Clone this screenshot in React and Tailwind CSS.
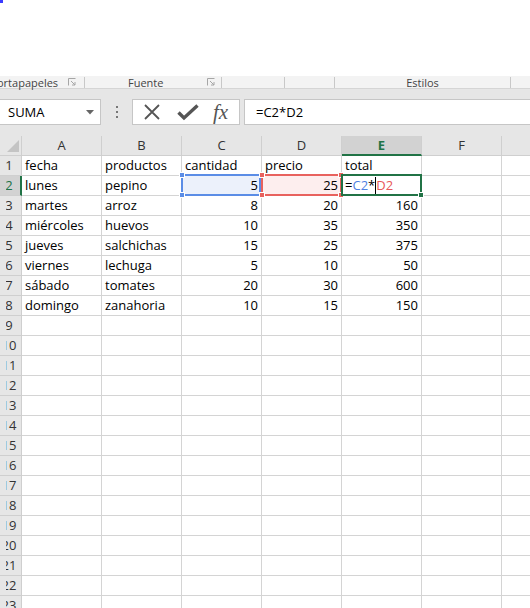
import React from "react";

const COLS = ["A", "B", "C", "D", "E", "F", ""];

const rows = [
  ["fecha", "productos", "cantidad", "precio", "total"],
  ["lunes", "pepino", "5", "25", ""],
  ["martes", "arroz", "8", "20", "160"],
  ["miércoles", "huevos", "10", "35", "350"],
  ["jueves", "salchichas", "15", "25", "375"],
  ["viernes", "lechuga", "5", "10", "50"],
  ["sábado", "tomates", "20", "30", "600"],
  ["domingo", "zanahoria", "10", "15", "150"],
];

const UI = { fontFamily: '"Open Sans", "Noto Sans", sans-serif' };

function Launcher() {
  return (
    <svg width="8" height="8" viewBox="0 0 8 8">
      <path d="M0.5 7.5V0.5H7.5" fill="none" stroke="#a6a6a6" />
      <path d="M3 3L7 7M7 4V7H4" fill="none" stroke="#a6a6a6" />
    </svg>
  );
}

function Handle({ pos, color }) {
  const p = {
    tl: "-left-[4px] -top-[4px]",
    tr: "-right-[4px] -top-[4px]",
    bl: "-left-[4px] -bottom-[4px]",
    br: "-right-[4px] -bottom-[4px]",
  }[pos];
  return <div className={`absolute w-[6px] h-[6px] border border-white ${p}`} style={{ background: color }} />;
}

function Cell({ col, row, value }) {
  const numeric = col >= 2 && row > 0;
  const isC2 = row === 1 && col === 2;
  const isD2 = row === 1 && col === 3;
  const isE2 = row === 1 && col === 4;
  let bg = "";
  if (isC2) bg = "bg-[#ecf1fb]";
  if (isD2) bg = "bg-[#fdeeee]";
  const right = numeric && !isE2;
  return (
    <div
      className={`relative h-[20px] border-r border-b border-[#d4d4d4] flex items-center text-[13px] leading-none text-black ${bg} ${
        right ? "justify-end pr-[3px]" : "pl-[3px]"
      }`}
    >
      {isE2 ? (
        <span className="flex items-center">
          <span>=</span>
          <span className="text-[#4f81e3]">C2</span>
          <span>*</span>
          <span className="w-px h-[17px] bg-black" />
          <span className="text-[#e8585a]">D2</span>
        </span>
      ) : (
        <span>{value}</span>
      )}
      {isC2 && (
        <div className="absolute -left-[1px] -top-[2px] right-0 -bottom-[1px] border-2 border-[#5b8de6] z-10">
          <Handle pos="tl" color="#5b8de6" />
          <Handle pos="bl" color="#5b8de6" />
        </div>
      )}
      {isD2 && (
        <div className="absolute -left-[1px] -top-[2px] -right-[1px] -bottom-[1px] border-2 border-[#e8625e] z-10">
          <Handle pos="tl" color="#e8625e" />
          <Handle pos="tr" color="#e8625e" />
          <Handle pos="bl" color="#e8625e" />
          <Handle pos="br" color="#e8625e" />
        </div>
      )}
      {isE2 && (
        <div className="absolute -left-[1px] -top-[2px] -right-[1px] -bottom-[1px] border-2 border-[#217346] z-10">
          <div className="absolute -right-[4px] -bottom-[4px] w-[6px] h-[6px] bg-[#217346] border border-white" />
        </div>
      )}
    </div>
  );
}

export default function App() {
  const allRows = Array.from({ length: 23 }, (_, i) => rows[i] || []);
  return (
    <div className="w-[530px] h-[608px] overflow-hidden bg-white relative" style={UI}>
      <div className="absolute left-0 top-0 w-[3px] h-[3px] bg-[#3b3bff]" />
      <div className="h-[76px]" />

      {/* ribbon group labels */}
      <div className="h-[13px] bg-[#f3f3f3] border-b border-[#d5d5d5] flex items-center text-[11px] text-[#444] leading-none">
        <div className="w-[85px] flex items-center border-r border-[#c8c8c8] h-[11px]">
          <span className="-ml-[3px]">ortapapeles</span>
          <span className="ml-[10px]"><Launcher /></span>
        </div>
        <div className="w-[137px] flex items-center border-r border-[#c8c8c8] h-[11px]">
          <span className="ml-[43px]">Fuente</span>
          <span className="ml-auto mr-[6px]"><Launcher /></span>
        </div>
        <div className="w-[63px] border-r border-[#c8c8c8] h-[11px]" />
        <div className="w-[50px] border-r border-[#c8c8c8] h-[11px]" />
        <div className="w-[176px] border-r border-[#c8c8c8] h-[11px] flex justify-center items-center">
          <span>Estilos</span>
        </div>
      </div>

      {/* formula bar area */}
      <div className="h-[47px] bg-[#e6e6e6] pt-[10px]">
        <div className="flex items-stretch h-[26px]">
          <div className="w-[101px] bg-white border border-[#c6c6c6] border-l-0 flex items-center pl-[8px] pr-[6px] text-[13px] text-black">
            <span className="leading-none">SUMA</span>
            <svg width="8" height="5" viewBox="0 0 8 5" className="ml-auto">
              <path d="M0 0H8L4 4.5Z" fill="#666" />
            </svg>
          </div>
          <div className="w-[31px] flex flex-col items-center justify-center gap-[3px]">
            <span className="w-[2px] h-[2px] bg-[#777]" />
            <span className="w-[2px] h-[2px] bg-[#777]" />
            <span className="w-[2px] h-[2px] bg-[#777]" />
          </div>
          <div className="w-[108px] bg-white border border-[#c6c6c6] flex items-center">
            <svg width="18" height="18" viewBox="0 0 18 18" className="ml-[10px]">
              <path d="M2 2L16 16M16 2L2 16" stroke="#555" strokeWidth="1.8" fill="none" />
            </svg>
            <svg width="22" height="18" viewBox="0 0 22 18" className="ml-[16px]">
              <path d="M1.5 9.5L7 15L20.5 2.5" stroke="#555" strokeWidth="3.4" fill="none" />
            </svg>
            <span
              className="ml-[14px] text-[21px] italic text-[#555] leading-none"
              style={{ fontFamily: '"Liberation Serif", "DejaVu Serif", serif' }}
            >
              fx
            </span>
          </div>
          <div className="w-[4px]" />
          <div className="flex-1 bg-white border border-[#c6c6c6] border-r-0 flex items-center pl-[11px] text-[13px] text-black">
            <span className="leading-none">=C2*D2</span>
          </div>
        </div>
      </div>

      {/* grid */}
      <div className="grid grid-cols-[22px_80px_80px_80px_80px_80px_80px_80px]">
        <div className="h-[20px] bg-[#e6e6e6] border-r border-b border-[#cfcfcf] relative overflow-hidden">
          <svg width="12" height="12" viewBox="0 0 12 12" className="absolute right-[2px] bottom-[3px]">
            <path d="M12 0V12H0Z" fill="#c4c4c4" />
          </svg>
        </div>
        {COLS.map((c, i) => (
          <div
            key={i}
            className={`h-[20px] flex items-center justify-center text-[13px] leading-none border-r ${
              c === "E"
                ? "bg-[#d2d2d2] text-[#217346] font-bold border-b-2 border-b-[#217346] border-r-[#cfcfcf]"
                : "bg-[#e6e6e6] text-[#333] border-b border-[#cfcfcf]"
            }`}
          >
            {c}
          </div>
        ))}

        {allRows.map((r, ri) => (
          <React.Fragment key={ri}>
            <div
              className={`h-[20px] flex border-b border-[#cfcfcf] ${
                ri === 1 ? "bg-[#d2d2d2] border-r-2 border-r-[#217346]" : "bg-[#e6e6e6] border-r border-[#cfcfcf]"
              }`}
            >
              <div className="ml-[6px] flex-1 overflow-hidden">
                <div
                  className={`-ml-[11px] w-[28px] h-full flex items-center justify-center text-[13px] leading-none ${
                    ri === 1 ? "text-[#217346]" : "text-[#333]"
                  }`}
                >
                  {ri + 1}
                </div>
              </div>
            </div>
            {COLS.map((_, ci) => (
              <Cell key={ci} col={ci} row={ri} value={r[ci] || ""} />
            ))}
          </React.Fragment>
        ))}
      </div>
    </div>
  );
}
